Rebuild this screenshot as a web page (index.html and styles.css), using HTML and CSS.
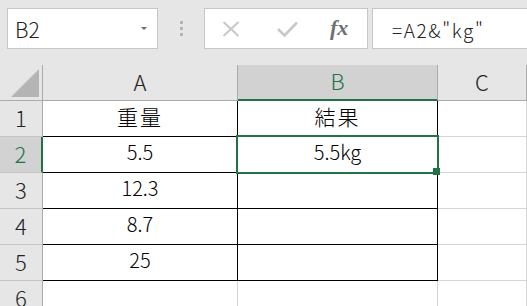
FILE: index.html
```html
<!DOCTYPE html>
<html lang="ja">
<head>
<meta charset="utf-8">
<link rel="stylesheet" href="styles.css">
</head>
<body>
<div class="toolbar">
  <div class="namebox">
    <span class="name">B2</span>
    <svg class="dd" width="6" height="3" viewBox="0 0 6 3"><polygon points="0,0 6,0 3,3" fill="#6a6a6a"/></svg>
  </div>
  <div class="sep"><span class="dot"></span><span class="dot"></span><span class="dot"></span></div>
  <div class="btns">
    <svg class="ico-x" width="18" height="16" viewBox="0 0 18 16"><path d="M1.5 1 L16.5 15 M16.5 1 L1.5 15" stroke="#c8c8c8" stroke-width="2" fill="none"/></svg>
    <svg class="ico-ok" width="21" height="16" viewBox="0 0 21 16"><polyline points="1,8 7.5,14.5 20,1.5" stroke="#c8c8c8" stroke-width="2.6" fill="none"/></svg>
    <span class="fx">fx</span>
  </div>
  <div class="formula">=A2&amp;"kg"</div>
</div>
<div class="sheet">
  <div class="corner"><svg width="28" height="28" viewBox="0 0 28 28"><polygon points="28,0 28,28 0,28" fill="#b4b4b4"/></svg></div>
  <div class="hd">A</div>
  <div class="hd sel-col">B</div>
  <div class="hd">C</div>

  <div class="rh">1</div>
  <div class="cell tb cjk">重量</div>
  <div class="cell tb cjk">結果</div>
  <div class="cell"></div>

  <div class="rh sel-row">2</div>
  <div class="cell tb">5.5</div>
  <div class="cell tb">5.5kg</div>
  <div class="cell"></div>

  <div class="rh">3</div>
  <div class="cell tb">12.3</div>
  <div class="cell tb"></div>
  <div class="cell"></div>

  <div class="rh">4</div>
  <div class="cell tb">8.7</div>
  <div class="cell tb"></div>
  <div class="cell"></div>

  <div class="rh">5</div>
  <div class="cell tb">25</div>
  <div class="cell tb"></div>
  <div class="cell"></div>

  <div class="rh">6</div>
  <div class="cell"></div>
  <div class="cell"></div>
  <div class="cell"></div>

  <div class="selection"></div>
  <div class="handle"></div>
</div>
</body>
</html>
```
FILE: styles.css
```css
html, body {
  margin: 0;
  padding: 0;
  width: 527px;
  height: 306px;
  overflow: hidden;
  background: #e6e6e6;
  font-family: "Noto Sans CJK JP", "Noto Sans", sans-serif;
  font-weight: 300;
  color: #000;
}

.toolbar {
  display: flex;
  align-items: flex-start;
  height: 65px;
  box-sizing: border-box;
  padding: 8px 0 0 7px;
}

.namebox {
  width: 151px;
  height: 41px;
  box-sizing: border-box;
  background: #fff;
  border: 1px solid #c6c6c6;
  display: flex;
  align-items: center;
  justify-content: space-between;
  padding: 2px 10px 0 7px;
}

.name {
  font-size: 21px;
  line-height: 1;
  color: #222;
}

.dd {
  display: block;
  margin-top: -3px;
}

.sep {
  width: 46px;
  display: flex;
  flex-direction: column;
  align-items: center;
  gap: 3px;
  padding-top: 13px;
}

.dot {
  display: block;
  width: 3px;
  height: 3px;
  background: #b4b4b4;
}

.btns {
  width: 164px;
  height: 41px;
  box-sizing: border-box;
  background: #fff;
  border: 1px solid #c6c6c6;
  display: flex;
  align-items: center;
  padding-left: 17px;
}

.ico-x {
  display: block;
}

.ico-ok {
  display: block;
  margin-left: 37px;
}

.fx {
  margin-left: 32px;
  font-family: "Liberation Serif", serif;
  font-style: italic;
  font-weight: bold;
  font-size: 22px;
  line-height: 1;
  color: #707070;
  margin-top: -2px;
}

.formula {
  flex: 1;
  height: 41px;
  box-sizing: border-box;
  background: #fff;
  border: 1px solid #c6c6c6;
  margin-left: 4px;
  margin-right: -6px;
  padding: 1px 0 0 19px;
  display: flex;
  align-items: center;
  font-size: 19px;
  letter-spacing: 1.6px;
  line-height: 1;
  color: #222;
}

.sheet {
  position: relative;
  display: grid;
  grid-template-columns: 43px 195px 200px 1fr;
  grid-auto-rows: 36px;
}

.sheet > div {
  box-sizing: border-box;
  display: flex;
  align-items: center;
  justify-content: center;
  line-height: 1;
}

.corner {
  background: #e6e6e6;
  border-right: 1px solid #ababab;
  border-bottom: 1px solid #ababab;
  justify-content: flex-end !important;
  align-items: flex-end !important;
  padding: 0 3px 3px 0;
}

.corner svg {
  display: block;
}

.hd {
  background: #e6e6e6;
  border-right: 1px solid #ababab;
  border-bottom: 1px solid #ababab;
  font-size: 22px;
  padding-bottom: 4px;
  color: #222;
}

.rh {
  background: #e6e6e6;
  border-right: 1px solid #ababab;
  border-bottom: 1px solid #c4c4c4;
  font-size: 22px;
  padding-bottom: 4px;
  color: #222;
}

.sel-col {
  background: #d2d2d2;
  color: #217346;
  border-bottom: 2px solid #217346;
}

.sel-row {
  background: #d2d2d2;
  color: #217346;
  border-right: 2px solid #217346;
}

.cell {
  background: #fff;
  border-right: 1px solid #d4d4d4;
  border-bottom: 1px solid #d4d4d4;
  font-size: 20px;
  padding-bottom: 6px;
}

.cell.tb {
  border-right-color: #000;
  border-bottom-color: #000;
}

.cjk {
  font-size: 21px;
  letter-spacing: 2px;
  padding-bottom: 4px !important;
}

.selection {
  position: absolute;
  left: 236px;
  top: 70px;
  width: 203px;
  height: 39px;
  border: 2px solid #217346;
  pointer-events: none;
}

.handle {
  position: absolute;
  left: 433px;
  top: 103px;
  width: 7px;
  height: 7px;
  background: #217346;
}
```
